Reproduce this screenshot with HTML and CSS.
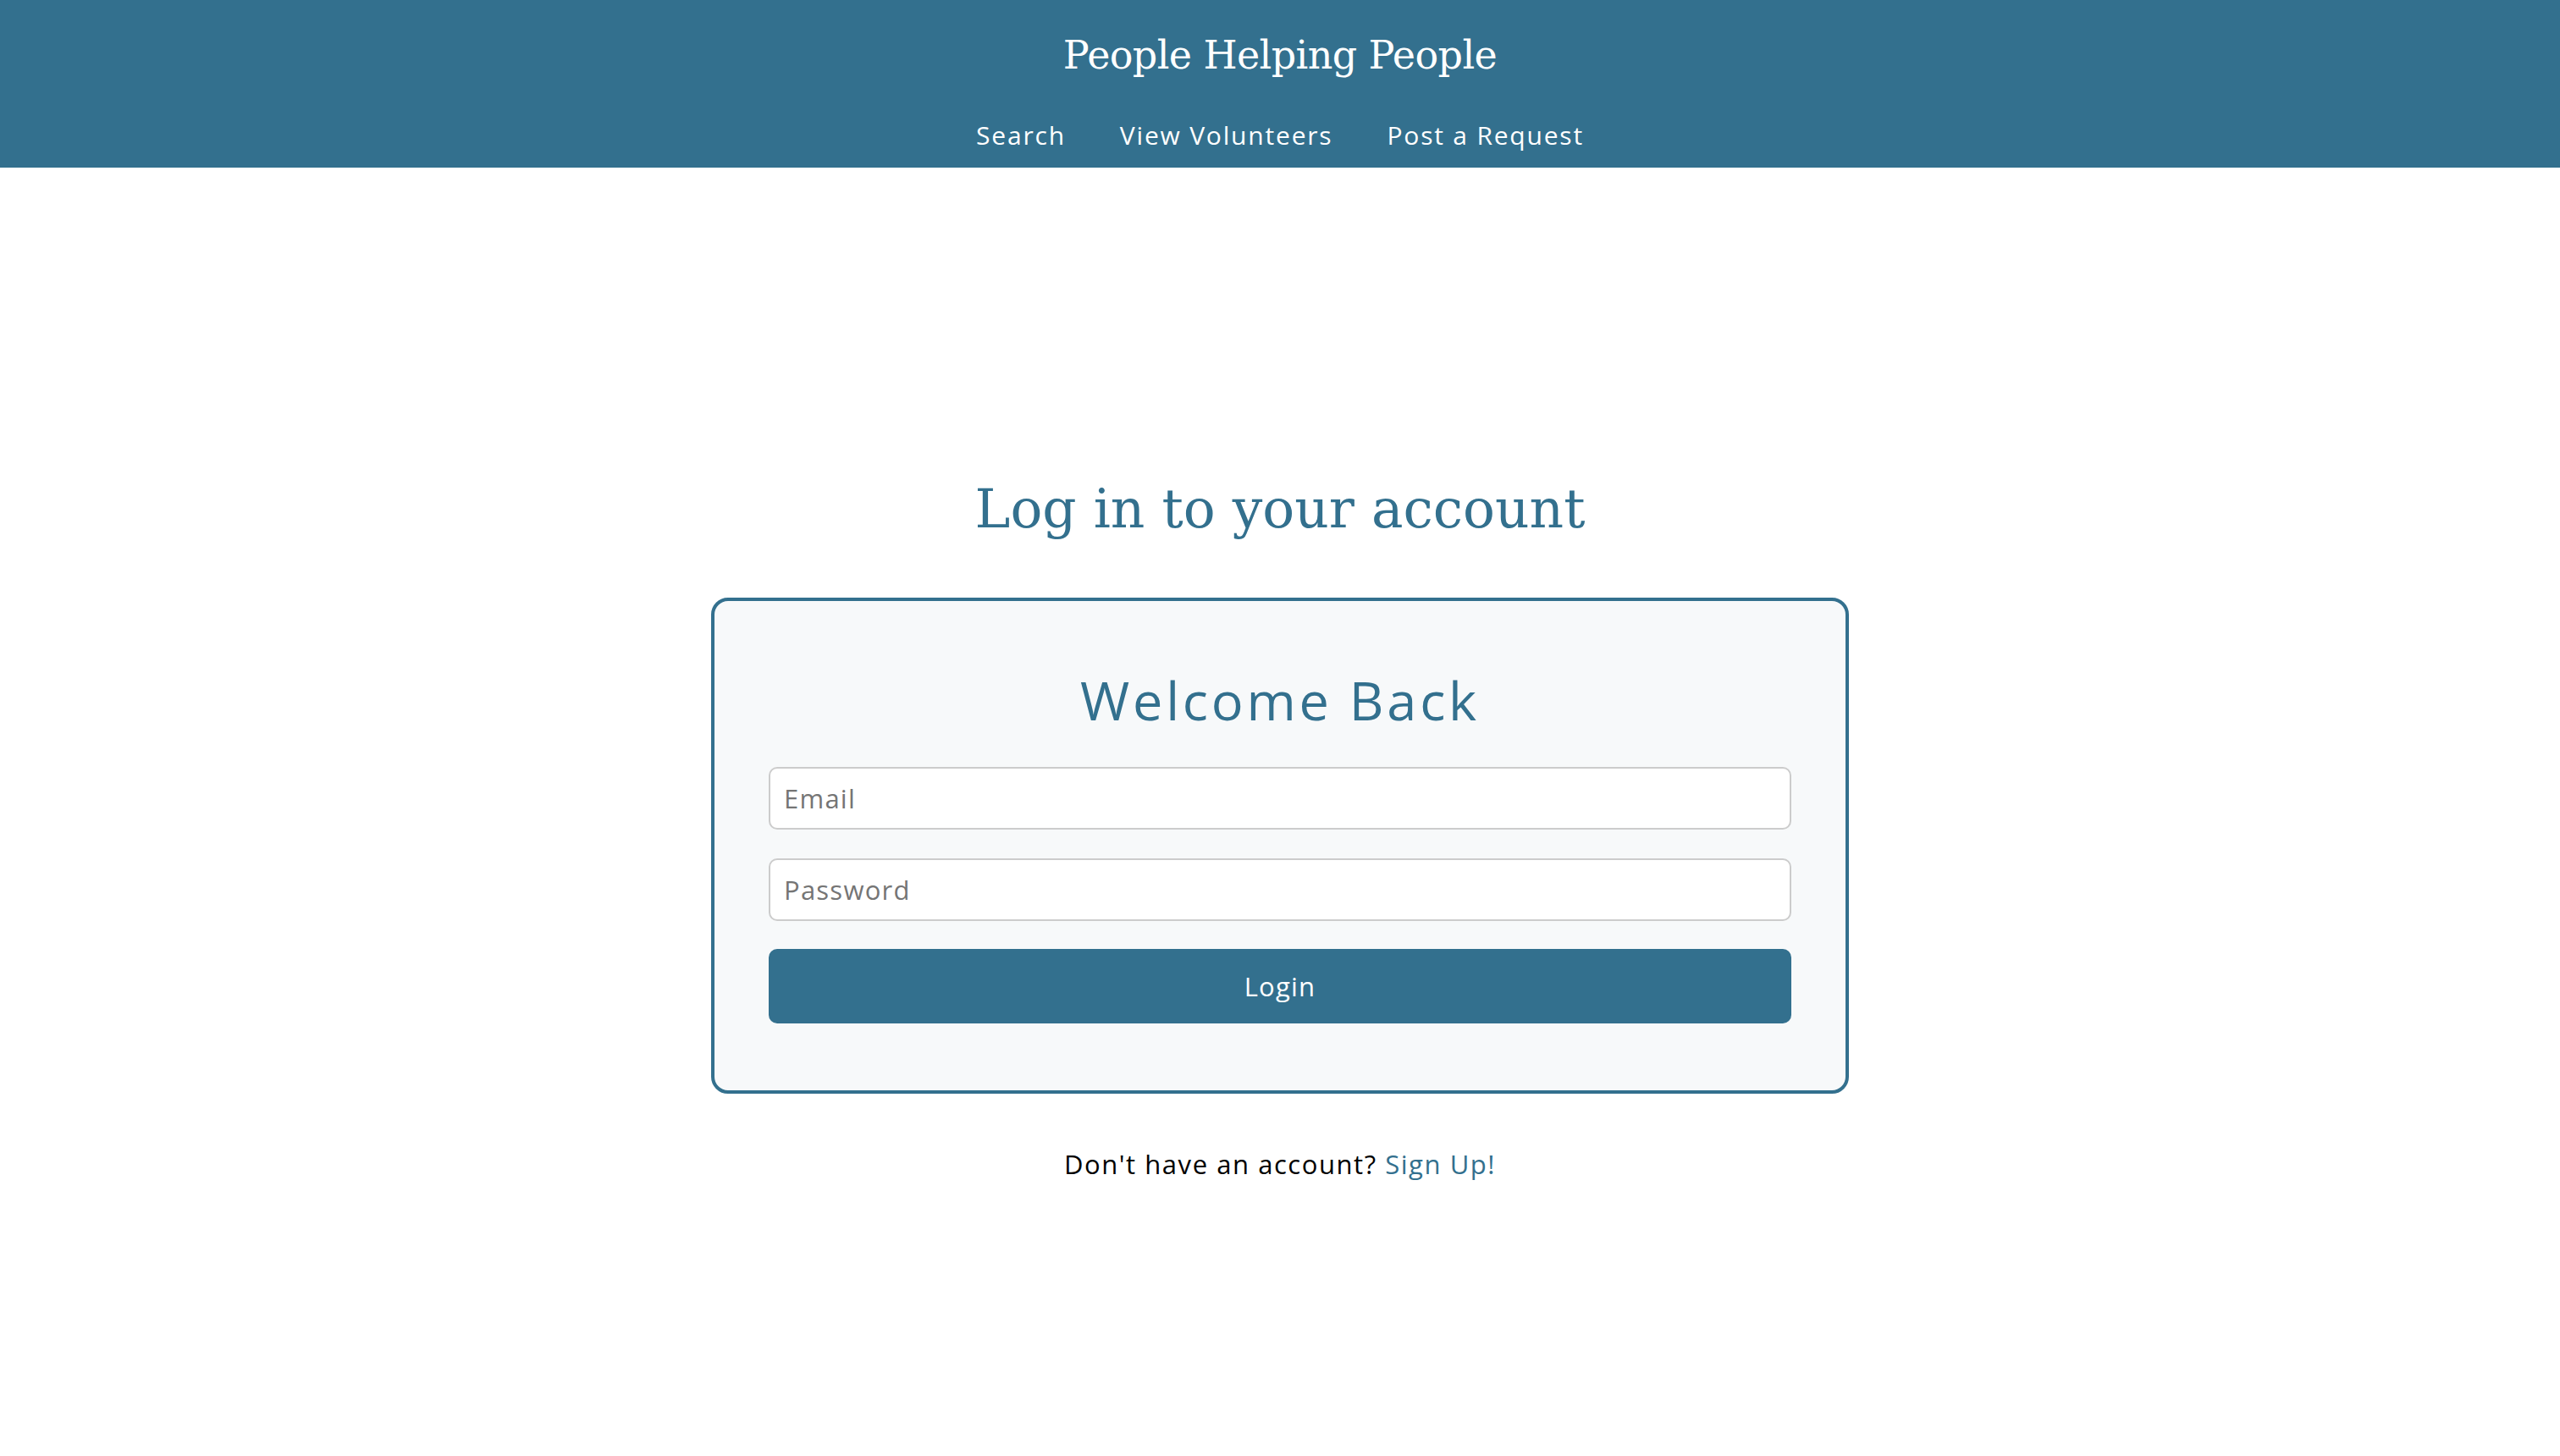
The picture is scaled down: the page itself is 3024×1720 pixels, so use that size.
FILE: index.html
```html
<!DOCTYPE html>
<html lang="en">
<head>
<meta charset="utf-8">
<title>People Helping People - Log in</title>
<link rel="stylesheet" href="styles.css">
</head>
<body>
<header class="site-header">
  <h1 class="brand">People Helping People</h1>
  <nav class="nav">
    <a href="#" class="nav-link">Search</a>
    <a href="#" class="nav-link">View Volunteers</a>
    <a href="#" class="nav-link">Post a Request</a>
  </nav>
</header>
<main class="main">
  <h2 class="page-title">Log in to your account</h2>
  <form class="card">
    <h3 class="card-title">Welcome Back</h3>
    <input class="field" type="email" placeholder="Email">
    <input class="field" type="password" placeholder="Password">
    <button class="btn" type="button">Login</button>
  </form>
  <p class="signup">Don't have an account? <a href="#" class="signup-link">Sign Up!</a></p>
</main>
</body>
</html>
```
FILE: styles.css
```css
* { box-sizing: border-box; }
html, body { margin: 0; padding: 0; }
body {
  background: #ffffff;
  font-family: "Open Sans", "Noto Sans", sans-serif;
  color: #000;
}
.site-header {
  height: 198px;
  background: #33708e;
  display: flex;
  flex-direction: column;
  align-items: center;
  padding-top: 37px;
}
.brand {
  margin: 0;
  font-family: "DejaVu Serif", "Liberation Serif", serif;
  font-weight: normal;
  font-size: 46px;
  line-height: 56px;
  letter-spacing: -0.6px;
  color: #ffffff;
}
.nav {
  margin-top: 46px;
  display: flex;
  gap: 64px;
}
.nav-link {
  font-size: 30px;
  line-height: 41px;
  letter-spacing: 0.06em;
  color: #ffffff;
  text-decoration: none;
}
.main {
  display: flex;
  flex-direction: column;
  align-items: center;
}
.page-title {
  margin: 367px 0 0;
  font-family: "DejaVu Serif", "Liberation Serif", serif;
  font-weight: normal;
  font-size: 63px;
  line-height: 74px;
  color: #33708e;
}
.card {
  margin-top: 67px;
  width: 1344px;
  background: #f7f9fa;
  border: 4px solid #33708e;
  border-radius: 20px;
  padding: 74px 64px 79px;
  display: flex;
  flex-direction: column;
}
.card-title {
  margin: 0 0 36px;
  text-align: center;
  font-weight: normal;
  font-size: 63px;
  line-height: 86px;
  letter-spacing: 0.06em;
  color: #33708e;
}
.field {
  height: 74px;
  border: 2px solid #cccccc;
  border-radius: 10px;
  background: #ffffff;
  padding: 0 16px;
  font-family: "Open Sans", "Noto Sans", sans-serif;
  font-size: 31px;
  letter-spacing: 0.04em;
  color: #333;
  margin-bottom: 34px;
}
.field + .field { margin-bottom: 33px; }
.field::placeholder { color: #757575; }
.btn {
  height: 88px;
  border: none;
  border-radius: 10px;
  background: #33708e;
  color: #ffffff;
  font-family: "Open Sans", "Noto Sans", sans-serif;
  font-size: 31px;
  letter-spacing: 0.04em;
}
.signup {
  margin: 62px 0 0;
  font-size: 31px;
  line-height: 42px;
  letter-spacing: 0.05em;
  color: #000;
}
.signup-link {
  color: #33708e;
  text-decoration: none;
}
```
